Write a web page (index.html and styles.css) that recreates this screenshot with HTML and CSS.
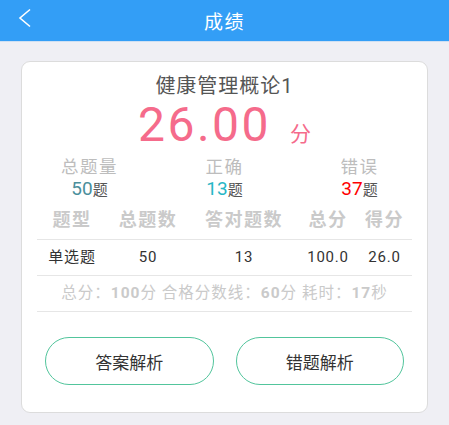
FILE: index.html
```html
<!DOCTYPE html>
<html lang="zh-CN">
<head>
    <meta charset="UTF-8">
    <meta name="viewport" content="width=device-width, initial-scale=1.0">
    <title>成绩</title>
    <link rel="stylesheet" href="styles.css">
</head>
<body>

    <div class="topbar">
        <a href="#" class="voltar">
            <svg width="16" height="22" viewBox="0 0 16 22">
                <polyline points="12,1.5 2,10 12,18.5" fill="none" stroke="#fff" stroke-width="1.6"/>
            </svg>
        </a>
        <h1>成绩</h1>
    </div>

    <div class="cartao">
        <div class="titulo">健康管理概论1</div>
        <div class="nota">26.00<span class="unidade">分</span></div>

        <div class="resumo">
            <div class="item">
                <div class="rotulo">总题量</div>
                <div class="valor"><span class="total">50</span>题</div>
            </div>
            <div class="item">
                <div class="rotulo">正确</div>
                <div class="valor"><span class="certo">13</span>题</div>
            </div>
            <div class="item">
                <div class="rotulo">错误</div>
                <div class="valor"><span class="errado">37</span>题</div>
            </div>
        </div>

        <div class="tabela">
            <div class="linha cabecalho">
                <span>题型</span><span>总题数</span><span>答对题数</span><span>总分</span><span>得分</span>
            </div>
            <div class="linha dados">
                <span>单选题</span><span>50</span><span>13</span><span>100.0</span><span>26.0</span>
            </div>
            <div class="info">
                总分：<b>100</b>分 合格分数线：<b>60</b>分 耗时：<b>17</b>秒
            </div>
        </div>

        <div class="botoes">
            <button>答案解析</button>
            <button>错题解析</button>
        </div>
    </div>

</body>
</html>
```

FILE: styles.css
```css
/* Estilos gerais */
body {
    margin: 0;
    background-color: #efeff4;
    font-family: Roboto, "Noto Sans CJK SC", sans-serif;
    color: #333;
}

/* Barra superior */
.topbar {
    height: 41px;
    background-color: #339ef6;
    border-bottom: 1px solid #cfe0f2;
    display: flex;
    align-items: center;
    justify-content: center;
    position: relative;
}

.topbar h1 {
    margin: 0;
    font-size: 19px;
    letter-spacing: 1.5px;
    font-weight: normal;
    color: white;
}

.voltar {
    position: absolute;
    left: 18px;
    top: 8px;
}

/* Cartao de resultado */
.cartao {
    margin: 19px 21px 0 21px;
    background-color: #fff;
    border: 1px solid #dcdcdc;
    border-radius: 9px;
    padding: 14px 0 27px 0;
}

.titulo {
    text-align: center;
    font-size: 20px;
    letter-spacing: 1px;
    line-height: 20px;
    color: #555;
}

.nota {
    text-align: center;
    font-size: 48px;
    letter-spacing: 2.5px;
    line-height: 48px;
    padding-top: 5px;
    color: #f56b8b;
}

.unidade {
    font-size: 21px;
    letter-spacing: 0;
    margin-left: 19px;
}

.resumo {
    display: grid;
    grid-template-columns: 1fr 1fr 1fr;
    margin-top: -2px;
}

.item {
    text-align: center;
}

.rotulo {
    font-size: 17.5px;
    letter-spacing: 1.5px;
    line-height: 22px;
    color: #bdbdbd;
}

.valor {
    font-size: 15px;
    line-height: 22px;
    color: #555;
}

.valor span {
    font-size: 19px;
}

.total {
    color: #4b8f9c;
}

.certo {
    color: #27b6c6;
}

.errado {
    color: #ff0000;
}

/* Tabela */
.tabela {
    margin: 4px 15px 0 15px;
}

.linha {
    display: grid;
    grid-template-columns: 70px 82px 110px 58px 1fr;
    text-align: center;
}

.cabecalho {
    font-size: 18px;
    letter-spacing: 1.5px;
    font-weight: bold;
    color: #cacaca;
    line-height: 30px;
    padding-bottom: 4px;
    border-bottom: 1px solid #e6e6e6;
}

.dados {
    font-size: 15px;
    letter-spacing: 0.8px;
    line-height: 35px;
    color: #333;
    border-bottom: 1px solid #e6e6e6;
}

.info {
    text-align: center;
    font-size: 15.5px;
    letter-spacing: 1px;
    line-height: 35px;
    color: #cacaca;
    border-bottom: 1px solid #e6e6e6;
}

/* Botoes */
.botoes {
    display: flex;
    gap: 22px;
    padding: 0 23px;
    margin-top: 25px;
}

.botoes button {
    flex: 1;
    height: 48px;
    background-color: #fff;
    border: 1.5px solid #52c59c;
    border-radius: 24px;
    font-family: Roboto, "Noto Sans CJK SC", sans-serif;
    font-size: 17px;
    color: #333;
}
```
